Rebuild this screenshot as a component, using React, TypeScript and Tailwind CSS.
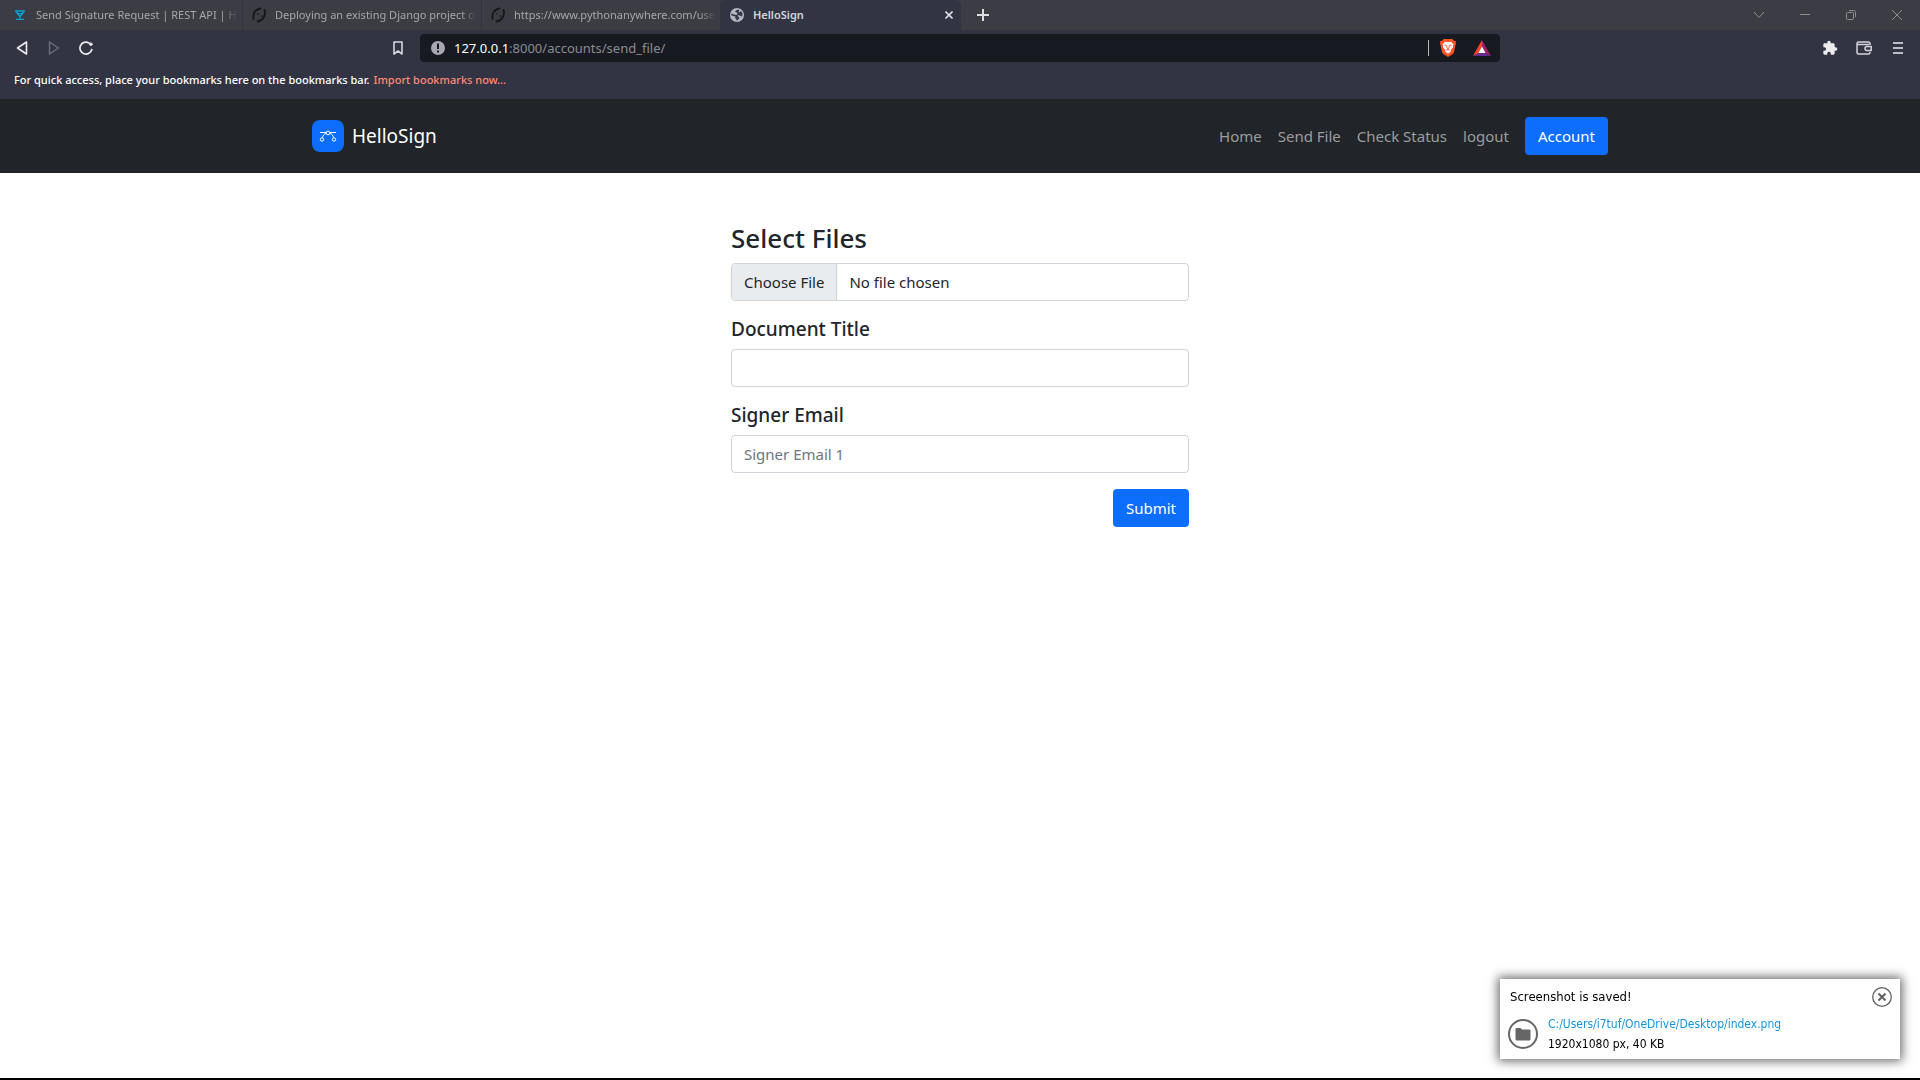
import type { ReactNode } from 'react'

const tabs = [
    { title: 'Send Signature Request | REST API | H', icon: <SignFavicon /> },
    { title: 'Deploying an existing Django project o', icon: <SnakeFavicon /> },
    { title: 'https://www.pythonanywhere.com/use', icon: <SnakeFavicon /> },
]

const navLinks = ['Home', 'Send File', 'Check Status', 'logout']

function SignFavicon() {
    return (
        <svg width="10" height="10" viewBox="0 0 10 10" fill="none" stroke="#05a3d6">
            <path d="M0 1h10M1 9.500h8" strokeWidth="1.600" />
            <path d="M1 1.500l4 5 4-5" strokeWidth="1.600" />
            <path d="M3 3.500h4M5 6v3" />
        </svg>
    )
}

function SnakeFavicon() {
    return (
        <svg width="14" height="16" viewBox="0 0 14 16" fill="none" stroke="#15161a" strokeWidth="1.800" strokeLinecap="round">
            <path d="M8.500 1.500C3.500 2 .5 6.500 1.500 12" />
            <path d="M12.500 3C14 8.500 11 13.500 5.500 14.500" />
            <path d="M6 6.500v1M9.500 8.500v1" strokeWidth="1.200" />
        </svg>
    )
}

function GlobeIcon() {
    return (
        <svg width="14" height="14" viewBox="0 0 14 14" className="shrink-0">
            <circle cx="7" cy="7" r="7" fill="#b4b6bf" />
            <path d="M7 1.800L5 3.500 7.500 5 7 7 3.500 6.500 1.500 5.500C1.200 6.500 1.300 7 1.500 7.500l4 1-.5 1.500 1.500 1L6 12.600 8 12l1.500-2.500-2-1.500L8.500 7l3.500 1.500C12.800 7 12.500 4.500 11 3L9.500 4.500 8.500 3.500 9.500 2C8.700 1.700 7.800 1.600 7 1.800z" fill="#323443" />
        </svg>
    )
}

function IconButton({ label, className = '', children }: { label: string; className?: string; children: ReactNode }) {
    return (
        <button type="button" aria-label={label} className={`flex shrink-0 items-center justify-center ${className}`}>
            {children}
        </button>
    )
}

function TabStrip() {
    return (
        <div className="flex h-[30px] bg-[#3c3c44] pl-1 text-[11px] text-[#a6a6aa]">
            {tabs.map((tab) => (
                <button key={tab.title} type="button" className="flex w-[239px] min-w-0 items-center gap-2 border-r border-[#34353c] pr-1 pl-2">
                    <span className="flex w-4 shrink-0 justify-center">{tab.icon}</span>
                    <span className="flex-1 overflow-hidden text-left whitespace-nowrap mask-r-from-92%">{tab.title}</span>
                </button>
            ))}
            <div className="flex w-60 min-w-0 items-center rounded-t-md bg-[#323443] pr-1 pl-[9px]">
                <GlobeIcon />
                <span className="ml-[9px] flex-1 font-semibold text-[#d5d6da]">HelloSign</span>
                <IconButton label="Close tab" className="size-4">
                    <svg width="8" height="8" viewBox="0 0 8 8" stroke="#dcdde0" strokeWidth="1.6">
                        <path d="M0.500 0.500l7 7M7.500 0.500l-7 7" />
                    </svg>
                </IconButton>
            </div>
            <IconButton label="New tab" className="w-11">
                <svg width="12" height="12" viewBox="0 0 12 12" stroke="#dcdde0" strokeWidth="2">
                    <path d="M6 0v12M0 6h12" />
                </svg>
            </IconButton>
            <div className="ml-auto flex">
                <IconButton label="Search tabs" className="w-[46px]">
                    <svg width="12" height="12" viewBox="0 0 12 12" fill="none" stroke="#8c8c91">
                        <path d="M1 3l5 5.500L11 3" />
                    </svg>
                </IconButton>
                <IconButton label="Minimize" className="w-[46px]">
                    <svg width="10" height="10" viewBox="0 0 10 10" stroke="#8c8c91">
                        <path d="M0 4.500h10" />
                    </svg>
                </IconButton>
                <IconButton label="Restore" className="w-[46px]">
                    <svg width="10" height="10" viewBox="0 0 10 10" fill="none" stroke="#8c8c91">
                        <rect x="0.500" y="2.500" width="7" height="7" rx="1" />
                        <path d="M3 .5h4.500a2 2 0 0 1 2 2V7" />
                    </svg>
                </IconButton>
                <IconButton label="Close" className="w-[46px]">
                    <svg width="10" height="10" viewBox="0 0 10 10" stroke="#8c8c91">
                        <path d="M0 0l10 10M10 0L0 10" />
                    </svg>
                </IconButton>
            </div>
        </div>
    )
}

function BraveIcon() {
    return (
        <svg width="16" height="18" viewBox="0 0 16 18">
            <path d="M3.500 0h9l1.500 2 1.600-.2.400 3.200-.5 1L14 13c-.3 1.200-1 1.800-2 2.500L8 18l-4-2.500C3 14.800 2.300 14.200 2 13L.5 6 0 5l.4-3.200L2 2z" fill="#fb542b" />
            <path d="M5 2.800l3 .5 3-.5 2.500 2.700-.7 1 .4 1.500-2.500 3 .3 1.200L8 14.800l-3-2.600.3-1.200-2.500-3 .4-1.500-.7-1z" fill="#fff" />
            <path d="M4.500 6l2.300.6M11.500 6l-2.300.6M6.800 6.800L7 9l1 .8L9 9l.2-2.200M6 11.300l2-.9 2 .9" fill="none" stroke="#fb542b" strokeWidth="0.900" />
        </svg>
    )
}

function RewardsIcon() {
    return (
        <svg width="18" height="16" viewBox="0 0 18 16">
            <path d="M9 0L0 16l6-3 3-6z" fill="#ff4724" />
            <path d="M9 0l9 16-6-3-3-6z" fill="#9e1f63" />
            <path d="M0 16h18l-6-3H6z" fill="#662d91" />
            <path d="M9 6.500L12.500 13h-7z" fill="#fff" />
        </svg>
    )
}

function Toolbar() {
    return (
        <div className="flex h-9 items-center bg-[#323443]">
            <div className="flex w-[420px] shrink-0 items-center px-3">
                <IconButton label="Back" className="w-5">
                    <svg width="12" height="14" viewBox="0 0 12 14" fill="none" stroke="#ececee" strokeWidth="1.600" strokeLinejoin="round">
                        <path d="M10.500 1v12L1.500 7z" />
                    </svg>
                </IconButton>
                <IconButton label="Forward" className="ml-3 w-5">
                    <svg width="12" height="14" viewBox="0 0 12 14" fill="none" stroke="#6c6e7a" strokeWidth="1.400" strokeLinejoin="round">
                        <path d="M1.500 1v12l9-6z" />
                    </svg>
                </IconButton>
                <IconButton label="Reload" className="ml-3 w-5">
                    <svg width="14" height="14" viewBox="0 0 14 14" fill="none" stroke="#ececee" strokeWidth="1.700" strokeLinecap="round">
                        <path d="M10 1.900A6 6 0 1 0 12.800 8.500" />
                        <circle cx="11.800" cy="3.200" r="1.300" fill="#ececee" strokeWidth="1" />
                    </svg>
                </IconButton>
                <IconButton label="Bookmark this page" className="ml-auto w-5">
                    <svg width="10" height="14" viewBox="0 0 10 14" fill="none" stroke="#d6d7dc" strokeWidth="1.600" strokeLinejoin="round">
                        <path d="M1 1h8v12L5 10l-4 3z" />
                    </svg>
                </IconButton>
            </div>
            <div className="flex h-7 max-w-[1080px] min-w-0 flex-1 items-center rounded bg-[#171a21] pr-[9px] pl-[11px]">
                <svg width="14" height="14" viewBox="0 0 14 14" className="shrink-0">
                    <circle cx="7" cy="7" r="7" fill="#a7a8b0" />
                    <path d="M6 2.500h2v5.500H6zM6 9.500h2v2H6z" fill="#171a21" />
                </svg>
                <p className="ml-[9px] flex-1 truncate text-[13px] leading-6 text-[#8b8c91]">
                    <span className="text-white">127.0.0.1</span>:8000/accounts/send_file/
                </p>
                <div className="mr-[11px] h-4 w-px bg-[#b5b6bb]" />
                <IconButton label="Brave Shields"><BraveIcon /></IconButton>
                <IconButton label="Brave Rewards" className="ml-[17px]"><RewardsIcon /></IconButton>
            </div>
            <div className="ml-auto flex items-center gap-[18px] pr-[14px]">
                <IconButton label="Extensions">
                    <svg width="16" height="16" viewBox="0 0 24 24" fill="#ececee">
                        <path d="M20.500 11H19V7c0-1.100-.9-2-2-2h-4V3.500a2.500 2.500 0 0 0-5 0V5H4c-1.100 0-2 .9-2 2v3.800h1.500a2.700 2.700 0 0 1 0 5.400H2V20c0 1.100.9 2 2 2h3.800v-1.500a2.700 2.700 0 0 1 5.400 0V22H17c1.100 0 2-.9 2-2v-4h1.500a2.500 2.500 0 0 0 0-5z" />
                    </svg>
                </IconButton>
                <IconButton label="Wallet">
                    <svg width="16" height="14" viewBox="0 0 16 14" fill="none" stroke="#d3d4d9" strokeWidth="1.500">
                        <path d="M14 4V2.500A1.500 1.500 0 0 0 12.500 1H2.500A1.500 1.500 0 0 0 1 2.500v9A1.500 1.500 0 0 0 2.500 13h10a1.500 1.500 0 0 0 1.500-1.500V11M1.500 3.500H13" />
                        <path d="M15.200 5.500H11a2 2 0 0 0 0 4h4.200z" />
                    </svg>
                </IconButton>
                <IconButton label="Menu" className="w-4">
                    <svg width="10" height="12" viewBox="0 0 10 12" stroke="#ececee" strokeWidth="1.600">
                        <path d="M0 1h10M0 6h10M0 11h10" />
                    </svg>
                </IconButton>
            </div>
        </div>
    )
}

function SiteHeader() {
    return (
        <header className="bg-[#212529]">
            <nav className="mx-auto flex max-w-[1320px] items-center px-3 py-[18px]">
                <a href="#" className="flex items-center gap-2 text-[19px] text-white">
                    <svg width="32" height="32" viewBox="0 0 32 32" fill="none" stroke="#fff">
                        <rect width="32" height="32" rx="8" fill="#0d6efd" stroke="none" />
                        <path d="M8 12.500h6M18 12.500h6" />
                        <circle cx="16" cy="13" r="1.800" />
                        <path d="M14 13.500c-2 .5-3 2-3.500 4M18 13.500c2 .5 3 2 3.500 4" />
                        <circle cx="10" cy="19.500" r="1.700" />
                        <circle cx="22" cy="19.500" r="1.700" />
                    </svg>
                    HelloSign
                </a>
                <div className="ml-auto flex items-center gap-4 text-[15px] text-[#9b9d9e]">
                    {navLinks.map((label) => (
                        <a key={label} href="#">{label}</a>
                    ))}
                    <a href="#" className="rounded bg-[#0d6efd] px-[13px] py-[7px] leading-6 text-white">Account</a>
                </div>
            </nav>
        </header>
    )
}

function SendFileForm() {
    return (
        <form className="mx-auto flex w-full max-w-[458px] flex-col pt-12">
            <label htmlFor="file" className="mb-2 text-[26px] leading-[34px] font-medium">Select Files</label>
            <input
                id="file"
                type="file"
                className="mb-4 h-[38px] rounded border border-[#ced4da] text-[15px] file:mr-3 file:h-9 file:border-r file:border-[#ced4da] file:bg-[#e9ecef] file:px-3"
            />
            <label htmlFor="title" className="mb-2 text-[19px] leading-6 font-medium">Document Title</label>
            <input id="title" type="text" className="mb-4 h-[38px] rounded border border-[#ced4da] px-3 text-[15px]" />
            <label htmlFor="signer" className="mb-2 text-[19px] leading-6 font-medium">Signer Email</label>
            <input
                id="signer"
                type="email"
                placeholder="Signer Email 1"
                className="mb-4 h-[38px] rounded border border-[#ced4da] px-3 text-[15px] placeholder:text-[#6c757d]"
            />
            <button type="submit" className="h-[38px] self-end rounded bg-[#0d6efd] px-[13px] text-[15px] text-white">Submit</button>
        </form>
    )
}

function SavedToast() {
    return (
        <div className="fixed right-5 bottom-[21px] flex h-20 w-[400px] flex-col bg-white px-2 font-['DejaVu_Sans_Condensed','DejaVu_Sans',sans-serif] text-xs text-black shadow-[0_0_10px_2px_rgba(0,0,0,0.6)]">
            <div className="flex items-center justify-between pt-2">
                <p className="pl-[2px] text-[13px]">Screenshot is saved!</p>
                <IconButton label="Dismiss">
                    <svg width="20" height="20" viewBox="0 0 20 20" fill="none" stroke="#606060">
                        <circle cx="10" cy="10" r="9.300" strokeWidth="1.300" />
                        <path d="M6.500 6.500l7 7M13.500 6.500l-7 7" strokeWidth="2" />
                    </svg>
                </IconButton>
            </div>
            <div className="flex items-center gap-[10px] pt-[7px]">
                <svg width="30" height="30" viewBox="0 0 30 30">
                    <circle cx="15" cy="15" r="14" fill="none" stroke="#666" strokeWidth="2" />
                    <path d="M7.500 10a1 1 0 0 1 1-1h4l1.500 1.500h7.500a1 1 0 0 1 1 1V20a1.500 1.500 0 0 1-1.500 1.500H9A1.500 1.500 0 0 1 7.500 20z" fill="#666" />
                </svg>
                <div className="leading-5">
                    <a href="#" className="text-[#1794d8]">C:/Users/i7tuf/OneDrive/Desktop/index.png</a>
                    <p>1920x1080 px, 40 KB</p>
                </div>
            </div>
        </div>
    )
}

export default function App() {
    return (
        <div className="flex min-h-screen flex-col border-b-2 border-black bg-white font-['Noto_Sans','Open_Sans',sans-serif] text-[#212529]">
            <TabStrip />
            <Toolbar />
            <div className="flex h-[33px] items-center gap-1 bg-[#323443] pb-1 pl-[14px] text-[11px] font-medium text-white">
                <p>For quick access, place your bookmarks here on the bookmarks bar.</p>
                <a href="#" className="text-[#ff8a73]">Import bookmarks now...</a>
            </div>
            <SiteHeader />
            <main className="flex-1">
                <SendFileForm />
            </main>
            <SavedToast />
        </div>
    )
}
